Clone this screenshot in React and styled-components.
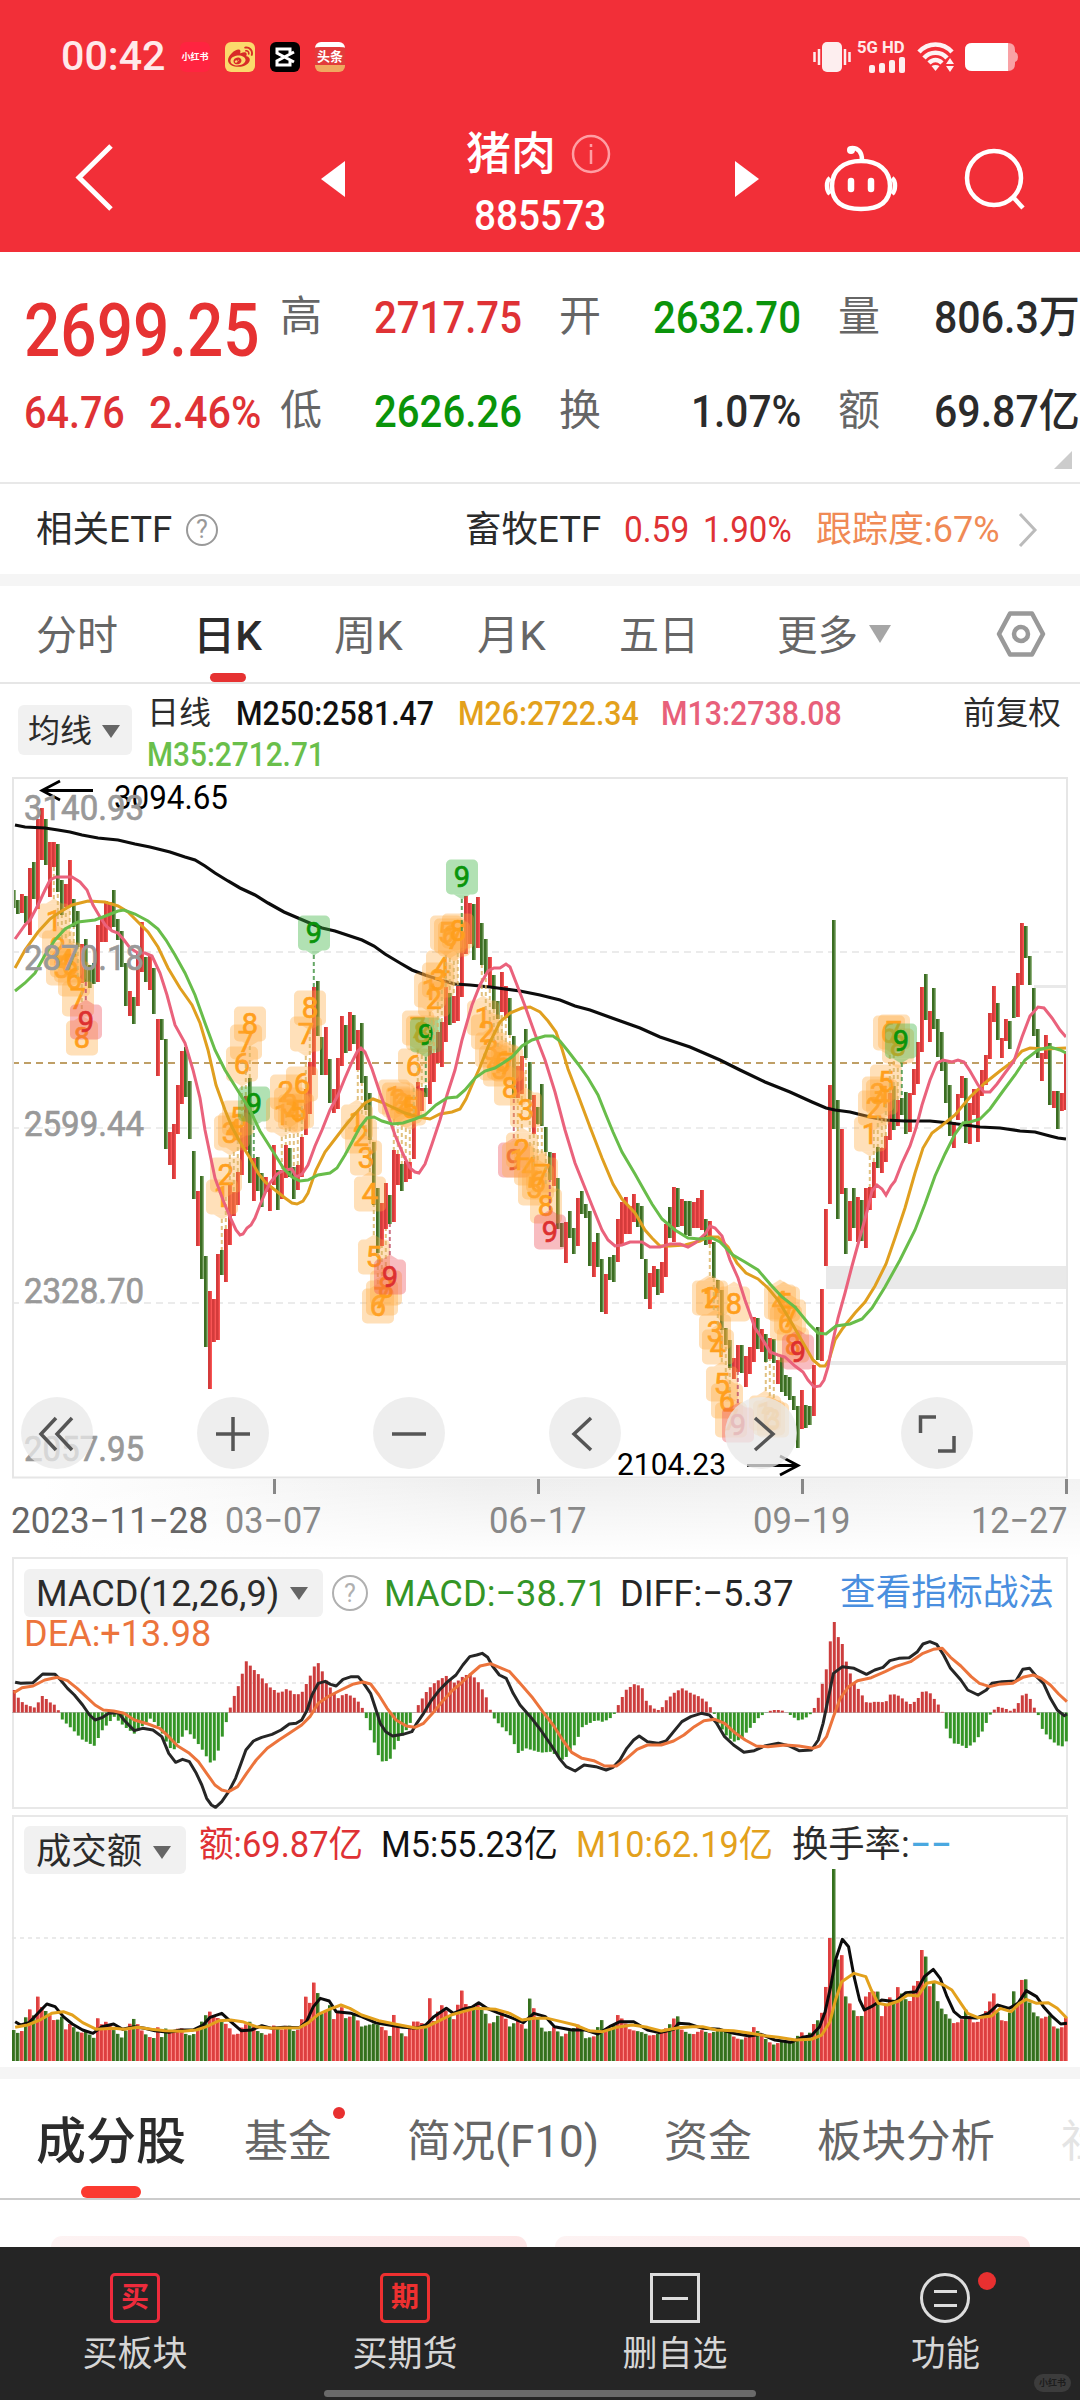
import React, { useLayoutEffect, useRef, useState } from "react";
import styled, { createGlobalStyle } from "styled-components";
import { FaWeibo } from "react-icons/fa";

const GlobalStyle = createGlobalStyle`
    * {
        box-sizing: border-box;
    }
    body {
        margin: 0;
        background: #fff;
        font-family: Roboto, "Noto Sans CJK SC", sans-serif;
    }
`;

/* ---------- data ---------- */

// one candle per trading day: direction, high, low
const CANDLES = `G890-908 G900-914 R894-913 G896-923 R868-935 G862-899 R819-909 R808-860 G819-865 R842-897 R842-867 G844-892
G880-915 R884-907 R860-907 G899-927 G911-947 R944-983 G939-982 G965-988 G963-984 R925-982 R917-942 R901-942
R902-929 G890-927 G919-940 G931-967 G963-1006 R991-1016 G997-1024 R953-1006 R922-972 G957-982 R955-990 G968-1014
R1019-1076 G1019-1040 G1039-1149 R1132-1165 R1124-1179 R1085-1134 R1051-1104 G1047-1097 G1081-1139 G1151-1199 R1191-1246 G1176-1279
G1256-1347 R1291-1389 R1299-1342 R1254-1340 G1250-1275 R1229-1282 R1184-1245 R1192-1216 R1172-1205 R1127-1175 R1096-1150 G1078-1183
R1158-1201 G1157-1191 G1173-1207 R1177-1192 R1187-1211 R1145-1185 G1170-1210 R1170-1199 R1145-1178 G1148-1177 G1167-1199 R1165-1190
R1137-1177 R1089-1135 R1062-1114 R987-1075 G981-1036 G1037-1075 R1027-1075 G1059-1103 R1089-1113 R1058-1109 R1016-1066 G1025-1053
R1012-1051 G1015-1044 R1030-1070 G1023-1083 G1076-1110 G1093-1140 G1142-1205 G1188-1253 R1203-1246 R1183-1229 G1195-1224 R1150-1222
R1154-1185 G1164-1191 R1161-1182 R1162-1179 R1119-1159 R1082-1118 R1088-1111 G1088-1097 R1046-1104 R1053-1082 R1032-1063 R1022-1067
R987-1042 G993-1025 R996-1023 R986-1021 R932-997 R896-954 R903-944 G904-960 R897-948 G923-965 G939-974 R957-988
G975-1009 G1001-1019 R972-1012 R986-1018 G998-1035 G1036-1098 R1066-1098 R1056-1094 G1029-1058 G1062-1100 R1095-1134 G1107-1124
G1084-1126 G1127-1152 G1152-1180 R1153-1186 G1178-1229 G1223-1247 R1222-1263 G1211-1238 G1228-1254 R1198-1246 G1191-1214 G1204-1218
G1211-1266 R1242-1277 G1233-1267 G1259-1312 R1274-1314 G1257-1280 G1255-1282 R1219-1262 R1202-1244 R1197-1234 R1206-1234 R1194-1222
G1203-1227 G1206-1259 G1259-1299 R1273-1309 R1266-1287 G1269-1295 R1262-1293 R1224-1277 G1207-1238 R1187-1242 G1188-1227 R1199-1226
G1201-1235 G1201-1236 R1202-1228 R1198-1228 R1190-1230 G1219-1245 R1221-1244 G1242-1278 G1280-1293 G1290-1330 G1328-1345 G1340-1368
R1358-1379 R1345-1372 G1345-1373 R1356-1387 R1347-1374 R1317-1362 G1318-1349 R1329-1352 G1334-1362 R1338-1359 G1339-1363 R1360-1384
G1357-1392 G1375-1396 G1377-1400 G1396-1410 G1406-1448 R1390-1429 G1405-1428 G1406-1425 R1365-1416 G1327-1360 R1289-1361 R1209-1266
R1085-1204 G920-1129 G1100-1219 R1129-1194 G1188-1254 R1201-1241 G1188-1228 R1197-1242 G1200-1241 R1188-1248 R1187-1210 R1162-1198
G1147-1168 R1148-1173 R1136-1162 R1093-1140 G1086-1130 R1100-1126 G1098-1115 G1092-1134 R1093-1132 R1069-1095 R1042-1084 R987-1052
G974-1020 R1011-1042 G988-1029 G1019-1057 G1032-1071 G1062-1103 G1085-1136 R1122-1148 R1094-1120 R1076-1098 G1078-1143 R1103-1144
R1089-1115 R1090-1142 R1070-1096 R1055-1085 R1013-1059 R986-1022 G1003-1040 R1038-1058 R1019-1041 G1021-1049 G986-1018 R973-1017
R923-985 G926-958 G956-985 G988-1036 G1029-1058 R1053-1081 R1035-1059 G1043-1105 R1091-1108 G1091-1129 R1093-1111 R1051-1110`
    .split(/\s+/)
    .map((d, i) => {
        const [high, low] = d.slice(1).split("-").map(Number);
        return { x: 13.8 + i * 4, up: d[0] === "R", high, low };
    });

const MA250 =
    "15,825 25,827 45,828 58,830 70,832 82,835 98,838 118,840 135,844 150,847 170,852 185,857 195,860 205,866 215,873 228,881 240,888 255,895 268,903 284,912 298,918 312,924 322,928 335,931 350,936 362,940 374,946 385,954 400,963 412,970 425,975 440,980 455,984 470,985 490,987 505,989 520,991 540,995 560,1000 575,1006 590,1010 612,1018 640,1028 660,1037 690,1047 720,1060 740,1070 765,1082 790,1092 812,1102 826,1108 835,1110 850,1112 870,1117 885,1120 905,1121 930,1121 950,1123 980,1127 1000,1128 1020,1131 1035,1132 1050,1136 1058,1138 1066,1139";
const MA13 =
    "15,939 25,925 30,920 38,905 45,890 50,880 56,877 72,877 80,882 87,890 93,905 100,917 106,926 112,931 118,933 124,940 130,948 138,953 145,953 152,956 160,973 167,995 175,1025 185,1043 193,1070 200,1098 205,1130 215,1178 223,1200 230,1217 236,1230 240,1235 243,1234 247,1228 251,1225 255,1218 260,1205 266,1191 270,1183 277,1174 285,1170 292,1169 296,1177 302,1174 308,1165 315,1146 322,1130 330,1110 338,1095 345,1078 352,1062 357,1052 361,1048 365,1052 372,1069 380,1093 388,1115 395,1135 403,1154 410,1168 415,1172 419,1173 425,1164 432,1144 440,1120 447,1095 455,1070 462,1040 472,1005 480,985 488,971 494,968 500,968 506,964 510,967 517,985 525,1006 535,1034 545,1060 555,1092 565,1130 575,1163 585,1188 595,1213 602,1230 608,1240 615,1246 622,1245 630,1242 642,1242 650,1247 660,1247 670,1244 680,1244 688,1247 695,1243 705,1234 710,1226 715,1228 722,1236 730,1260 738,1278 745,1300 755,1328 763,1340 770,1352 778,1355 785,1357 795,1366 803,1372 808,1380 814,1387 820,1386 824,1380 828,1367 832,1345 838,1318 845,1293 852,1266 860,1237 868,1208 872,1191 877,1185 882,1189 886,1195 891,1186 895,1181 902,1163 910,1146 916,1128 922,1105 930,1080 937,1063 943,1060 952,1062 958,1060 964,1062 970,1071 978,1085 984,1092 990,1092 997,1084 1005,1073 1014,1061 1022,1037 1030,1016 1038,1007 1044,1008 1052,1018 1060,1030 1066,1037";
const MA26 =
    "15,968 25,950 38,932 50,919 60,912 72,905 88,901 105,902 118,906 128,912 138,922 148,932 158,947 168,968 180,988 192,1005 200,1023 208,1050 216,1085 225,1110 232,1127 240,1142 250,1158 258,1173 265,1182 275,1190 285,1198 292,1203 297,1204 303,1201 308,1193 316,1170 325,1152 335,1139 345,1126 355,1114 365,1103 373,1099 381,1102 392,1107 405,1113 418,1117 430,1119 440,1114 452,1112 460,1109 466,1099 472,1085 480,1067 490,1042 500,1022 510,1013 522,1008 530,1007 540,1012 548,1021 556,1032 562,1049 568,1069 578,1095 590,1127 602,1158 613,1184 622,1199 635,1213 645,1230 652,1238 660,1246 670,1246 685,1245 700,1241 708,1237 718,1237 728,1247 737,1263 746,1273 758,1279 768,1288 778,1300 790,1320 802,1341 813,1360 820,1366 825,1366 829,1360 835,1340 843,1328 855,1313 865,1302 875,1286 886,1264 895,1238 905,1208 915,1173 923,1148 932,1133 940,1127 955,1115 970,1097 985,1083 1000,1071 1012,1062 1022,1051 1030,1048 1045,1049 1066,1048";
const MA35 =
    "15,991 25,983 35,973 45,955 55,940 65,929 78,922 95,920 108,915 118,911 124,910 135,914 148,921 158,929 166,940 175,955 185,973 195,995 205,1023 215,1050 225,1070 240,1094 250,1110 260,1131 272,1150 284,1169 292,1177 300,1181 308,1180 318,1175 330,1173 337,1168 345,1155 352,1142 360,1127 367,1118 374,1117 382,1121 392,1124 403,1123 415,1119 425,1115 436,1105 447,1098 457,1097 465,1090 475,1078 485,1071 495,1068 503,1063 512,1057 522,1046 532,1040 545,1036 553,1036 560,1041 568,1051 578,1064 588,1078 598,1095 606,1115 613,1132 622,1152 635,1174 644,1190 652,1204 662,1219 675,1230 688,1238 700,1239 712,1238 720,1242 733,1255 745,1262 758,1270 770,1284 782,1297 795,1307 808,1323 818,1333 826,1334 836,1326 850,1324 862,1319 872,1308 885,1287 900,1260 915,1230 925,1204 935,1176 945,1154 955,1134 963,1123 970,1122 980,1119 990,1109 1003,1091 1015,1075 1025,1060 1038,1050 1050,1047 1060,1050 1066,1053";

// nine-turn counters, "x,y" of each badge; low = drawn under the candles
const SEQUENCES = [
    { low: true, at: "54,921 58,948 62,968 66,960 70,965 74,979 78,999 82,1038 86,1022" },
    { low: false, at: "222,1197 226,1175 230,1133 234,1130 238,1118 242,1064 246,1042 250,1024 254,1104" },
    { low: false, at: "282,1115 286,1092 290,1105 294,1112 298,1111 302,1084 306,1034 310,1008 314,933" },
    { low: true, at: "357,1122 361,1136 366,1158 370,1194 374,1257 378,1306 382,1298 386,1288 390,1277" },
    { low: false, at: "394,1097 398,1100 402,1104 406,1106 410,1108 414,1066 418,1028 422,1033 426,1035" },
    { low: false, at: "430,990 434,999 438,980 442,968 446,933 450,936 454,939 458,931 462,877" },
    { low: true, at: "483,1018 487,1032 491,1050 495,1063 499,1069 503,1062 507,1064 510,1088 514,1160" },
    { low: true, at: "518,1160 522,1150 526,1110 530,1168 534,1188 538,1182 542,1175 546,1206 550,1232" },
    { low: true, at: "708,1298 712,1298 715,1332 718,1347 722,1384 727,1401 731,1420 734,1304 738,1425" },
    { low: true, at: "765,1413 769,1418 773,1420 780,1302 784,1304 786,1323 790,1317 793,1345 798,1352" },
    { low: false, at: "870,1134 874,1108 878,1094 882,1097 886,1082 889,1033 894,1032 898,1046 901,1041" },
];

const HIST =
    "22,450 27,480 38,495 50,503 61,467 72,487 79,495 85,514 90,540 103,565 118,598 136,618 148,570 165,530 180,560 195,582 205,560 218,535 230,560 242,610 250,635 258,610 270,570 283,600 295,635 304,668 312,660 318,620 328,545 332,515 336,485 345,440 357,363 366,385 378,410 390,440 405,460 417,445 428,465 437,460 447,420 458,368 463,370 470,410 478,440 490,475 500,460 512,470 522,490 528,515 532,540 540,590 550,655 556,668 567,655 575,610 582,590 593,560 600,520 608,490 620,450 632,425 648,407 660,430 672,408 683,400 695,430 705,470 712,515 718,540 730,565 740,585 752,640 763,625 785,638 800,635 815,660 822,650 835,610 845,560 855,550 865,540 875,546 885,535 892,520 898,490 908,450 922,430 932,445 938,485 948,505 958,512 966,482 980,455 990,445 1003,460 1015,470 1025,485 1035,515 1042,550 1055,590 1067,607 1078,590 1090,560 1102,530 1112,518 1120,510 1133,510 1142,518 1150,530 1160,543 1172,530 1178,518 1185,490 1192,440 1200,380 1205,300 1209,246 1212,246 1216,290 1223,315 1228,365 1237,420 1248,455 1258,490 1270,485 1285,487 1293,460 1305,468 1320,493 1330,482 1340,450 1350,460 1362,495 1368,518 1373,565 1382,610 1392,612 1403,625 1415,605 1427,570 1435,530 1440,515 1447,500 1458,505 1468,514 1475,500 1485,460 1492,462 1500,500 1506,520 1513,570 1525,600 1540,623 1549,600";
const DIFF =
    "22,427 30,430 48,428 62,402 80,403 88,420 98,445 108,465 120,495 130,525 138,540 148,533 158,520 172,518 180,540 195,572 207,565 222,570 235,590 245,640 255,667 265,658 275,665 285,700 293,735 300,775 307,795 313,802 322,785 332,755 342,715 350,670 357,630 368,603 380,592 395,583 408,570 420,552 430,550 438,540 446,510 453,465 462,430 472,424 480,433 488,438 498,418 510,410 520,410 528,430 538,460 546,510 552,550 560,575 570,588 585,583 598,575 605,550 615,520 625,485 638,450 650,425 662,405 672,375 682,350 692,345 700,340 708,352 715,378 725,405 735,415 745,460 755,495 770,530 785,570 800,615 812,655 822,680 835,693 848,675 865,680 880,690 890,682 900,660 910,625 920,600 928,588 940,605 955,610 967,603 978,575 990,545 1003,530 1018,520 1030,525 1040,548 1052,590 1065,615 1080,637 1095,632 1110,618 1130,610 1145,617 1160,632 1178,630 1188,600 1195,550 1203,470 1210,400 1223,380 1240,385 1258,403 1270,390 1282,382 1292,362 1305,355 1320,353 1332,335 1340,312 1350,305 1360,313 1370,345 1380,385 1395,420 1405,450 1420,465 1432,450 1440,430 1455,425 1475,423 1485,388 1495,385 1505,410 1515,430 1525,475 1535,510 1545,527 1549,522";
const DEA =
    "20,458 32,443 48,438 65,420 83,412 98,422 112,445 125,470 138,495 150,510 165,513 180,520 195,540 215,552 232,565 245,590 258,618 275,640 288,665 300,700 312,735 322,750 332,755 345,740 358,700 372,660 388,625 405,600 420,580 438,555 450,530 462,490 478,468 495,450 512,433 527,426 538,432 550,465 562,505 575,540 590,558 602,562 615,550 628,520 642,485 655,455 668,432 682,405 697,378 712,371 725,382 740,395 755,430 772,470 788,515 803,555 817,600 830,637 845,655 862,662 878,678 895,678 910,655 925,628 940,615 960,615 978,603 993,585 1008,560 1022,542 1038,538 1052,550 1068,580 1082,600 1098,618 1115,620 1140,615 1160,618 1180,625 1190,618 1200,590 1210,530 1220,475 1232,440 1245,422 1265,413 1285,395 1300,380 1322,365 1340,340 1355,328 1368,325 1380,352 1395,378 1410,410 1422,430 1437,440 1450,433 1470,430 1485,412 1500,405 1512,415 1525,435 1537,462 1549,485";
const VOLUME =
    "20,690 30,705 42,620 48,660 54,585 60,620 70,640 80,665 90,650 95,690 102,670 115,700 125,695 137,715 142,655 150,680 155,660 165,690 178,715 185,680 195,655 205,690 215,710 225,715 230,675 235,712 242,680 250,700 262,680 272,708 285,700 293,665 303,632 312,650 322,660 332,680 342,712 352,680 363,665 375,695 390,708 398,675 410,690 418,670 430,702 438,660 444,590 449,620 454,548 457,548 461,575 468,650 478,610 485,660 495,615 503,660 513,640 525,680 545,670 558,685 566,708 571,640 577,680 588,715 598,665 610,665 618,680 624,595 630,665 640,612 650,640 660,660 669,572 672,572 676,612 686,625 695,612 705,640 713,680 728,630 740,680 752,660 765,690 769,595 775,625 785,680 795,700 805,680 815,710 830,690 840,672 850,715 862,710 873,657 880,690 890,680 897,645 905,660 915,690 930,695 945,708 958,700 970,680 983,642 990,690 1005,705 1018,690 1030,700 1045,690 1060,700 1068,715 1080,720 1095,680 1105,705 1122,735 1135,725 1150,730 1163,695 1172,715 1182,670 1188,660 1194,635 1199,560 1203,414 1206,414 1208,207 1213,207 1216,480 1222,462 1228,590 1235,615 1242,640 1250,660 1258,580 1265,575 1275,575 1280,650 1290,590 1298,600 1303,560 1312,590 1320,610 1327,555 1334,540 1337,450 1340,450 1344,468 1350,560 1357,540 1362,610 1372,640 1385,670 1395,665 1403,625 1412,668 1422,665 1430,640 1437,605 1443,580 1450,650 1458,670 1465,650 1472,573 1478,610 1483,540 1490,538 1496,620 1503,645 1515,658 1523,640 1530,680 1540,690 1549,645";
const VOL_M5 =
    "22,665 30,675 42,668 55,640 68,612 80,620 92,650 105,672 120,690 135,700 148,680 165,672 178,688 195,680 210,685 225,692 245,697 262,690 280,690 295,675 305,652 322,640 335,665 350,692 365,690 380,677 395,685 412,682 435,683 445,665 455,620 465,595 478,603 488,635 510,640 525,650 545,668 565,675 585,682 605,685 618,675 630,650 648,625 658,640 672,628 685,622 695,608 707,625 725,640 745,655 760,668 775,640 792,650 805,680 830,690 850,690 868,702 885,680 900,665 920,665 940,690 958,698 978,688 985,670 1000,672 1020,685 1045,688 1065,700 1088,708 1105,703 1125,720 1148,727 1165,712 1178,707 1190,680 1198,635 1206,560 1213,480 1223,418 1232,440 1240,530 1248,600 1255,630 1265,620 1280,600 1300,605 1315,578 1330,575 1342,530 1355,508 1365,535 1375,590 1385,635 1395,652 1418,654 1435,640 1448,615 1465,625 1478,610 1490,572 1505,590 1515,620 1528,650 1540,672 1549,670";
const VOL_M10 =
    "22,682 40,675 58,660 75,640 92,635 105,645 120,668 140,688 165,685 180,688 200,682 220,688 240,692 265,694 285,690 300,680 318,662 335,660 352,665 372,680 395,685 435,683 448,668 462,643 478,628 495,615 508,625 525,645 550,662 575,673 605,685 620,680 638,662 655,645 672,635 690,625 720,628 740,640 758,660 775,655 795,655 815,665 835,675 855,692 875,695 895,682 918,675 940,682 960,693 985,683 1005,680 1020,680 1040,690 1065,692 1090,700 1110,707 1130,712 1155,720 1178,718 1193,705 1205,665 1213,600 1222,545 1240,520 1257,530 1265,570 1275,610 1288,615 1305,603 1318,585 1333,588 1345,550 1357,545 1370,555 1382,570 1395,610 1405,640 1420,653 1440,648 1452,625 1468,635 1480,610 1490,598 1505,610 1522,608 1535,625 1549,655";

const parse = (text) => text.split(" ").map((p) => p.split(",").map(Number));

// indicator series are stored on a 1568-wide grid, 3 units per pixel in height
const toPanel = (text, top) => parse(text).map(([x, y]) => [(x * 1080) / 1568, top + y / 3]);

const sample = (points, x) => {
    const next = points.findIndex((p) => p[0] >= x);
    if (next === -1) return points[points.length - 1][1];
    if (next === 0) return points[0][1];
    const [x0, y0] = points[next - 1];
    const [x1, y1] = points[next];
    return y0 + ((y1 - y0) * (x - x0)) / (x1 - x0);
};

/* ---------- shared parts ---------- */

const Box = styled.span`
    display: inline-block;
    flex: none;
    width: ${(props) => props.$w}px;
    margin-left: ${(props) => props.$ml || 0}px;
    line-height: 1;
    font-size: ${(props) => props.$size}px;
    font-weight: ${(props) => props.$weight || 400};
    color: ${(props) => props.$color || "#2b2b2b"};
    white-space: nowrap;
`;

const Inner = styled.span`
    display: inline-block;
    transform-origin: left center;
`;

// condenses its text to the given width, like the narrow numerals of a quote font
function Label({ w, children, ...rest }) {
    const ref = useRef(null);
    const [ratio, setRatio] = useState(1);
    useLayoutEffect(() => {
        setRatio(w / ref.current.offsetWidth);
    }, [w, children]);
    const props = Object.fromEntries(Object.entries(rest).map(([k, v]) => ["$" + k, v]));
    return (
        <Box $w={w} {...props}>
            <Inner ref={ref} style={{ transform: `scaleX(${ratio})` }}>
                {children}
            </Inner>
        </Box>
    );
}

const Page = styled.main`
    position: relative;
    width: 1080px;
    height: 2400px;
    overflow: hidden;
    background: #fff;
    display: flex;
    flex-direction: column;
`;

const Band = styled.div`
    flex: none;
    height: 12px;
    margin-top: ${(props) => props.$mt || 0}px;
    background: #f5f5f5;
`;

const Caret = styled.i`
    flex: none;
    margin-left: ${(props) => props.$ml}px;
    border-left: ${(props) => props.$size}px solid transparent;
    border-right: ${(props) => props.$size}px solid transparent;
    border-top: ${(props) => props.$h}px solid ${(props) => props.$color || "#666"};
`;

const Help = styled.span`
    flex: none;
    display: flex;
    align-items: center;
    justify-content: center;
    width: ${(props) => props.$size}px;
    height: ${(props) => props.$size}px;
    margin-left: ${(props) => props.$ml}px;
    border: 2px solid ${(props) => props.$color};
    border-radius: 50%;
    color: ${(props) => props.$color};
    font-size: 25px;
    line-height: 1;
`;

const Icon = styled.svg`
    flex: none;
    margin-left: ${(props) => props.$ml || 0}px;
`;

/* ---------- header ---------- */

const Header = styled.header`
    flex: none;
    height: 252px;
    background: #f22f38;
    color: #fff;
`;

const StatusBar = styled.div`
    display: flex;
    align-items: center;
    height: 114px;
    padding-left: 61px;
`;

const AppIcon = styled.span`
    flex: none;
    display: flex;
    align-items: center;
    justify-content: center;
    width: 30px;
    height: 30px;
    margin-left: 15px;
    border-radius: 6px;
    background: ${(props) => props.$bg};
    font-size: ${(props) => props.$size || 9}px;
    font-weight: 700;
    line-height: 1;
    white-space: nowrap;
    overflow: hidden;
`;

const Toutiao = styled(AppIcon)`
    border-top: 5px solid #fff;
    border-bottom: 7px solid #f0a860;
`;

const Signal = styled.div`
    width: 49px;
    margin-left: 6px;
`;

const NavBar = styled.div`
    display: flex;
    align-items: center;
    height: 130px;
`;

const Title = styled.div`
    display: flex;
    flex-direction: column;
    width: 389px;
    padding-left: 120px;
    height: 130px;
    padding-top: 15px;
`;

const TitleRow = styled.div`
    display: flex;
    align-items: center;
    height: 50px;
    margin-bottom: 16px;
`;

function StatusIcons() {
    return (
        <>
            <Icon $ml={468} width="38" height="32" viewBox="0 0 38 32" fill="#fff" opacity=".92">
                <rect x="9" y="1" width="20" height="30" rx="5" />
                <path d="M6 8v16M1.500 11v10M32 8v16M36.500 11v10" stroke="#fff" strokeWidth="2.500" />
            </Icon>
            <Signal>
                <Label w={48} size={17} weight={700} color="#ffe9ea">
                    5G HD
                </Label>
                <svg width="49" height="16" viewBox="0 0 49 16" fill="#fff" opacity=".92">
                    <rect x="12" y="8" width="6" height="8" rx="2" />
                    <rect x="22" y="6" width="6" height="10" rx="2" />
                    <rect x="32" y="3" width="6" height="13" rx="2" />
                    <rect x="42" y="0" width="6" height="16" rx="2" />
                </svg>
            </Signal>
            <Icon $ml={11} width="38" height="32" viewBox="0 0 38 32" fill="none" stroke="#fff" strokeWidth="4.500" opacity=".94">
                <path d="M2 11C11 1 26 1 35 11M7 17c6-7 17-7 23 0M12 22c4-4 9-4 13 0" />
                <path d="M18.500 30l-4-5q4-2 8 0z" fill="#fff" stroke="none" />
                <path d="M33 17l4 6h-8zM33 31l4-6h-8z" fill="#fff" stroke="none" />
            </Icon>
            <Icon $ml={9} width="56" height="28" viewBox="0 0 56 28" fill="#fff">
                <path d="M8 0h36q7 0 7 7v2q3 1 3 5t-3 5v2q0 7-7 7H8q-7 0-7-7V7q0-7 7-7z" opacity=".55" />
                <path d="M8 0h36v28H8q-7 0-7-7V7q0-7 7-7z" />
            </Icon>
        </>
    );
}

function TopHeader() {
    return (
        <Header>
            <StatusBar>
                <Label w={104} size={40} weight={500} color="#ffe9ea">
                    00:42
                </Label>
                <AppIcon $bg="#ff2440">小红书</AppIcon>
                <AppIcon $bg="#fbd96c">
                    <FaWeibo size={25} color="#d82b28" />
                </AppIcon>
                <AppIcon $bg="#000">
                    <svg width="22" height="20" viewBox="0 0 22 20" fill="none" stroke="#fff" strokeWidth="3">
                        <path d="M20 5L3 14v4h13v-4M20 15L3 6V2h13v4" />
                    </svg>
                </AppIcon>
                <Toutiao $bg="#e23b3b" $size={13}>
                    头条
                </Toutiao>
                <StatusIcons />
            </StatusBar>
            <NavBar>
                <Icon width="120" height="80" viewBox="0 0 120 80" fill="none" stroke="#fff" strokeWidth="5">
                    <path d="M111 7L79 38.500L111 70" />
                </Icon>
                <Icon $ml={201} width="25" height="38" viewBox="0 0 25 38" fill="#fff">
                    <path d="M24 1v36L0 19z" />
                </Icon>
                <Title>
                    <TitleRow>
                        <Label w={90} size={45} weight={500} color="#fff">
                            猪肉
                        </Label>
                        <Icon $ml={15} width="40" height="42" viewBox="0 0 40 42" fill="none" stroke="#ff9ea3" strokeWidth="2.500">
                            <circle cx="20" cy="21" r="18" />
                            <path d="M20 17v14M20 11v3" />
                        </Icon>
                    </TitleRow>
                    <Label w={132} ml={8} size={42} weight={500} color="#fff">
                        885573
                    </Label>
                </Title>
                <Icon width="25" height="38" viewBox="0 0 25 38" fill="#fff">
                    <path d="M0 1v36L24 19z" />
                </Icon>
                <Icon $ml={63} width="76" height="70" viewBox="0 0 76 70" fill="none" stroke="#fff" strokeWidth="4.500">
                    <path d="M38 17c17 0 29 9 29 25S56 65 38 65S9 58 9 42s12-25 29-25z" />
                    <path d="M39 16c0-7-3-12-10-12" strokeLinecap="round" />
                    <circle cx="28" cy="6" r="4" fill="#fff" stroke="none" />
                    <path d="M7 34c-4 3-4 12 0 16M69 34c4 3 4 12 0 16" />
                    <path d="M28 37v8M48 37v8" strokeWidth="6.500" strokeLinecap="round" />
                </Icon>
                <Icon $ml={64} width="64" height="64" viewBox="0 0 64 64" fill="none" stroke="#fff" strokeWidth="4.500">
                    <circle cx="31" cy="31" r="27" />
                    <path d="M50 50l10 11" />
                </Icon>
            </NavBar>
        </Header>
    );
}

/* ---------- quote ---------- */

const QuoteSection = styled.section`
    position: relative;
    flex: none;
    display: flex;
    height: 232px;
    border-bottom: 2px solid #e8e8e8;
`;

const PriceBlock = styled.div`
    width: 280px;
    padding: 41px 0 0 24px;
    display: flex;
    flex-direction: column;
`;

const ChangeRow = styled.div`
    display: flex;
    margin-top: 22px;
`;

const Stats = styled.div`
    display: grid;
    grid-template-columns: repeat(3, 242px);
    grid-auto-rows: 94px;
    column-gap: 37px;
    padding-top: 18px;
`;

const Stat = styled.div`
    display: flex;
    align-items: center;
    justify-content: space-between;
`;

const Corner = styled.i`
    position: absolute;
    right: 8px;
    bottom: 13px;
    border-left: 18px solid transparent;
    border-bottom: 18px solid #ccc;
`;

const RED = "#df3235";
const GREEN = "#0a940a";

const STATS = [
    ["高", "2717.75", RED, 148],
    ["开", "2632.70", GREEN, 148],
    ["量", "806.3万", "#2b2b2b", 146],
    ["低", "2626.26", GREEN, 148],
    ["换", "1.07%", "#2b2b2b", 110],
    ["额", "69.87亿", "#2b2b2b", 146],
];

function Quote() {
    return (
        <QuoteSection>
            <PriceBlock>
                <Label w={236} size={75} weight={500} color="#e63232">
                    2699.25
                </Label>
                <ChangeRow>
                    <Label w={101} size={45} weight={500} color={RED}>
                        64.76
                    </Label>
                    <Label w={112} ml={24} size={45} weight={500} color={RED}>
                        2.46%
                    </Label>
                </ChangeRow>
            </PriceBlock>
            <Stats>
                {STATS.map(([name, value, color, w]) => (
                    <Stat key={name}>
                        <Label w={42} size={42} color="#666">
                            {name}
                        </Label>
                        <Label w={w} size={45} weight={500} color={color}>
                            {value}
                        </Label>
                    </Stat>
                ))}
            </Stats>
            <Corner />
        </QuoteSection>
    );
}

const EtfRow = styled.div`
    flex: none;
    display: flex;
    align-items: center;
    height: 90px;
    padding: 1px 0 0 36px;
`;

function Etf() {
    return (
        <EtfRow>
            <Label w={136} size={36}>相关ETF</Label>
            <Help $size={32} $ml={14} $color="#999">?</Help>
            <Label w={136} ml={247} size={36}>畜牧ETF</Label>
            <Label w={65} ml={23} size={36} color={RED}>0.59</Label>
            <Label w={89} ml={14} size={36} color={RED}>1.90%</Label>
            <Label w={184} ml={24} size={36} color="#f08a55">跟踪度:67%</Label>
            <Icon $ml={17} width="22" height="36" viewBox="0 0 22 36" fill="none" stroke="#bbb" strokeWidth="3">
                <path d="M3 2l15 16L3 34" />
            </Icon>
        </EtfRow>
    );
}

/* ---------- period tabs ---------- */

const PeriodTabs = styled.nav`
    flex: none;
    display: flex;
    align-items: center;
    height: 98px;
    padding-left: 36px;
    border-bottom: 2px solid #e6e6e6;
`;

const PeriodTab = styled.div`
    display: flex;
    align-items: center;
    height: 96px;
    padding-top: 4px;
    position: relative;
    margin-left: ${(props) => props.$ml || 0}px;
`;

const Underline = styled.i`
    position: absolute;
    bottom: 0;
    left: 50%;
    margin-left: -${(props) => props.$w / 2}px;
    width: ${(props) => props.$w}px;
    height: ${(props) => props.$h}px;
    border-radius: ${(props) => props.$h / 2}px;
    background: ${(props) => props.$color};
`;

const PERIODS = [
    ["分时", 82, 0],
    ["日K", 69, 75],
    ["周K", 69, 72],
    ["月K", 69, 74],
    ["五日", 80, 73],
    ["更多", 81, 78],
];

function Periods() {
    return (
        <PeriodTabs>
            {PERIODS.map(([name, w, ml]) => (
                <PeriodTab key={name} $ml={ml}>
                    <Label w={w} size={41} weight={name === "日K" ? 500 : 400} color={name === "日K" ? "#2b2b2b" : "#666"}>
                        {name}
                    </Label>
                    {name === "日K" && <Underline $w={36} $h={9} $color="#e63232" />}
                </PeriodTab>
            ))}
            <Caret $ml={11} $size={11} $h={18} $color="#a6a6a6" />
            <Icon $ml={105} width="50" height="46" viewBox="0 0 50 46" fill="none" stroke="#999" strokeWidth="4.500">
                <path d="M14 2.500h22L47 23L36 43.500H14L3 23z" strokeLinejoin="round" />
                <circle cx="25" cy="23" r="7" />
            </Icon>
        </PeriodTabs>
    );
}

/* ---------- moving average legend ---------- */

const MaBar = styled.div`
    flex: none;
    display: flex;
    height: 93px;
    padding-left: 18px;
`;

const Select = styled.button`
    flex: none;
    display: flex;
    align-items: center;
    width: ${(props) => props.$w}px;
    height: ${(props) => props.$h || 48}px;
    margin: ${(props) => props.$mt || 0}px 0 0 0;
    padding: ${(props) => props.$pt || 0}px 0 0 ${(props) => props.$pl || 12}px;
    border: 0;
    border-radius: 6px;
    background: #f1f1f1;
    font-family: inherit;
`;

const Legend = styled.div`
    padding: 8px 0 0 15px;
`;

const LegendRow = styled.div`
    display: flex;
    align-items: center;
    height: 41px;
`;

function MaLegend() {
    return (
        <MaBar>
            <Select $w={114} $h={50} $mt={21} $pl={10} $pt={2}>
                <Label w={64} size={32}>均线</Label>
                <Caret $ml={10} $size={9} $h={13} />
            </Select>
            <Legend>
                <LegendRow>
                    <Label w={64} size={32}>日线</Label>
                    <Label w={198} ml={25} size={34} weight={500} color="#111">M250:2581.47</Label>
                    <Label w={181} ml={24} size={34} weight={500} color="#e3a11c">M26:2722.34</Label>
                    <Label w={181} ml={22} size={34} weight={500} color="#e8607a">M13:2738.08</Label>
                    <Label w={98} ml={121} size={32}>前复权</Label>
                </LegendRow>
                <LegendRow>
                    <Label w={178} size={34} weight={500} color="#6abf4b">M35:2712.71</Label>
                </LegendRow>
            </Legend>
        </MaBar>
    );
}

/* ---------- candle chart ---------- */

const ChartPanel = styled.section`
    position: relative;
    flex: none;
    width: 1056px;
    height: ${(props) => props.$h}px;
    margin: ${(props) => props.$mt || 0}px 0 0 12px;
`;

const ChartSvg = styled.svg`
    position: absolute;
    left: 0;
    top: 0;
    display: block;
    font-family: Roboto, sans-serif;
`;

const Controls = styled.div`
    position: absolute;
    left: 9px;
    top: 620px;
    display: flex;
    gap: 104px;
`;

const RoundButton = styled.button`
    width: 72px;
    height: 72px;
    padding: 0;
    border: 0;
    border-radius: 50%;
    background: rgba(232, 232, 232, 0.76);
`;

const BADGE = {
    plain: ["rgba(255,170,60,.36)", "#ff9f1c", "#d9b260"],
    sell: ["rgba(60,180,65,.4)", "#0a940a", "#3f9140"],
    buy: ["rgba(235,70,80,.36)", "#dd3030", "#c05068"],
};

function Badge({ x, y, n, low }) {
    const [fill, ink, dash] = BADGE[n < 9 ? "plain" : low ? "buy" : "sell"];
    const candle = CANDLES[Math.round((x - 13.8) / 4)];
    const dir = low ? -1 : 1;
    const tip = y + dir * 22;
    const end = low ? candle.low : candle.high;
    const visible = low ? end < tip : end > tip;
    return (
        <g>
            {visible && <path d={`M${candle.x} ${tip}V${end}`} stroke={dash} strokeWidth="2" strokeDasharray="4 3" opacity=".8" />}
            <rect x={x - 16} y={y - 17.5} width="32" height="35" rx="5" fill={fill} />
            <path d={`M${x - 8} ${y + dir * 17.5}h16l-8 ${dir * 5}z`} fill={fill} />
            <text x={x} y={y + 10} fontSize="29" textAnchor="middle" fill={ink} stroke={ink} strokeWidth=".7">
                {n}
            </text>
        </g>
    );
}

const AXIS_LABELS = [
    ["3140.93", 820],
    ["2870.18", 970],
    ["2599.44", 1136],
    ["2328.70", 1303],
    ["2057.95", 1461],
];

const ICONS = [
    "M35 21L20 37L35 53M51 21L36 37L51 53",
    "M19 37H53M36 20V54",
    "M19 37H53",
    "M42 21L25 37L42 53",
    "M30 21L48 37L30 53",
    "M19.500 36V20H35M37 54H53V39",
];

function CandleChart() {
    return (
        <ChartPanel $h={702}>
            <ChartSvg width="1056" height="702" viewBox="12 777 1056 702" fill="none">
                <path d="M12 952H1067M12 1303H1067" stroke="#d8d8d8" strokeWidth="1.200" strokeDasharray="7 5" />
                <path d="M12 1128H1067" stroke="#e8e8e8" strokeWidth="1.500" strokeDasharray="7 5" />
                <path d="M826 1266h242v23H826zM829 1361h239v4H829zM1034 985h34v3h-34z" fill="#e9e9e9" />
                <path d="M12 1063H1067" stroke="#bf9f66" strokeWidth="1.800" strokeDasharray="7 5" />
                {CANDLES.map(({ x, up, high, low }) => (
                    <g key={x}>
                        <rect x={x - 1.8} y={high} width="4" height={low - high} fill={up ? "#f95555" : "#8fb27c"} />
                        <rect x={x - 1.8} y={high} width="2.600" height={low - high} fill={up ? "#d43b3b" : "#3b6d22"} />
                    </g>
                ))}
                <path d="M42 790.500H93M60 781L42 790.500L60 800" stroke="#000" strokeWidth="2.800" />
                <text x="114" y="809" fontSize="33" fill="#000" textLength="114" lengthAdjust="spacingAndGlyphs">
                    3094.65
                </text>
                <polyline points={MA250} stroke="#0c0c0c" strokeWidth="3.200" />
                {SEQUENCES.map(({ low, at }) =>
                    parse(at).map(([x, y], i) => <Badge key={x} x={x} y={y} n={i + 1} low={low} />)
                )}
                <polyline points={MA26} stroke="#e09f1f" strokeWidth="3" />
                <polyline points={MA13} stroke="#ea627c" strokeWidth="3" />
                <polyline points={MA35} stroke="#68bd4a" strokeWidth="3" />
                {AXIS_LABELS.map(([value, y]) => (
                    <text key={value} x="24" y={y} fontSize="35" fill="#999" stroke="#999" strokeWidth=".7" textLength="120" lengthAdjust="spacingAndGlyphs">
                        {value}
                    </text>
                ))}
                <path d="M13 1478V778H1067V1478M12 1477.500H1068" stroke="#e6e6e6" strokeWidth="2" />
                <text x="617" y="1475" fontSize="32" fill="#000" textLength="109" lengthAdjust="spacingAndGlyphs">
                    2104.23
                </text>
                <path d="M747 1465.500H798M780 1456L798 1465.500L780 1475" stroke="#000" strokeWidth="2.800" />
            </ChartSvg>
            <Controls>
                {ICONS.map((d) => (
                    <RoundButton key={d}>
                        <svg width="72" height="72" viewBox="0 0 72 72" fill="none" stroke="#555" strokeWidth="3.500">
                            <path d={d} />
                        </svg>
                    </RoundButton>
                ))}
            </Controls>
        </ChartPanel>
    );
}

const Axis = styled.div`
    flex: none;
    height: 78px;
    background: linear-gradient(to bottom, transparent, #fff), linear-gradient(to right, #fff 4%, #f8f8f8 22%, #eeeeee 45%, #f3f3f3 100%);
`;

const Ticks = styled.div`
    display: flex;
    gap: 261px;
    padding-left: 273px;
    height: 24px;
`;

const Tick = styled.i`
    flex: none;
    width: 3px;
    height: 15px;
    background: #888;
`;

const Dates = styled.div`
    display: flex;
    padding-left: 11px;
`;

function DateAxis() {
    return (
        <Axis>
            <Ticks>
                <Tick />
                <Tick />
                <Tick />
                <Tick />
            </Ticks>
            <Dates>
                <Label w={197} size={36} color="#666">2023−11−28</Label>
                <Label w={97} ml={17} size={36} color="#8a8a8a">03−07</Label>
                <Label w={98} ml={167} size={36} color="#888">06−17</Label>
                <Label w={98} ml={166} size={36} color="#888">09−19</Label>
                <Label w={97} ml={120} size={36} color="#888">12−27</Label>
            </Dates>
        </Axis>
    );
}

/* ---------- MACD and turnover ---------- */

const PanelHead = styled.div`
    position: relative;
    display: flex;
    align-items: center;
    padding: 12px 0 0 12px;
`;

const DeaRow = styled.div`
    position: relative;
    margin-top: -2px;
    padding-left: 12px;
`;

const VolumeLegend = styled.div`
    display: flex;
    margin: -10px 0 0 13px;
`;

function Macd() {
    const hist = toPanel(HIST, 1540);
    return (
        <ChartPanel $h={252}>
            <ChartSvg width="1056" height="252" viewBox="12 1557 1056 252" fill="none">
                <rect x="13" y="1558" width="1054" height="250" stroke="#e8e8e8" strokeWidth="2" />
                <path d="M12 1683H1067" stroke="#e4e4e4" strokeWidth="1.500" strokeDasharray="4 4" />
                <path d="M12 1712.500H1067" stroke="#bbb" strokeWidth="1" />
                {CANDLES.map(({ x }) => {
                    const y = sample(hist, x);
                    return y < 1712.5 ? (
                        <rect key={x} x={x - 1} y={y} width="3" height={1712.5 - y} fill="#cc3d3d" />
                    ) : (
                        <rect key={x} x={x - 1} y="1712.500" width="3" height={y - 1712.5} fill="#349526" />
                    );
                })}
                <polyline points={toPanel(DIFF, 1540).join(" ")} stroke="#262626" strokeWidth="3" strokeLinejoin="round" />
                <polyline points={toPanel(DEA, 1540).join(" ")} stroke="#ec743c" strokeWidth="3" strokeLinejoin="round" />
            </ChartSvg>
            <PanelHead>
                <Select $w={299} $pt={1}>
                    <Label w={243} size={36}>MACD(12,26,9)</Label>
                    <Caret $ml={11} $size={9} $h={13} />
                </Select>
                <Help $size={36} $ml={9} $color="#b0b0b0">?</Help>
                <Label w={223} ml={16} size={37} color="#349526">MACD:−38.71</Label>
                <Label w={174} ml={13} size={37} color="#262626">DIFF:−5.37</Label>
                <Label w={214} ml={46} size={36} color="#4a8fdf">查看指标战法</Label>
            </PanelHead>
            <DeaRow>
                <Label w={187} size={37} color="#ec743c">DEA:+13.98</Label>
            </DeaRow>
        </ChartPanel>
    );
}

function Turnover() {
    const volume = toPanel(VOLUME, 1800);
    return (
        <ChartPanel $h={247} $mt={5}>
            <ChartSvg width="1056" height="247" viewBox="12 1814 1056 247" fill="none">
                <path d="M13 2061V1816H1067V2061" stroke="#e8e8e8" strokeWidth="2" />
                <path d="M12 1938H1067" stroke="#e4e4e4" strokeWidth="1.500" strokeDasharray="4 4" />
                {CANDLES.map(({ x, up }) => {
                    const y = sample(volume, x);
                    return (
                        <g key={x}>
                            <rect x={x - 1.8} y={y} width="4" height={2061 - y} fill={up ? "#fb8a86" : "#a5c096"} />
                            <rect x={x - 1.8} y={y} width="2.800" height={2061 - y} fill={up ? "#dd3f3f" : "#34701d"} />
                        </g>
                    );
                })}
                <polyline points={toPanel(VOL_M5, 1800).join(" ")} stroke="#0c0c0c" strokeWidth="3" strokeLinejoin="round" />
                <polyline points={toPanel(VOL_M10, 1800).join(" ")} stroke="#e3a11c" strokeWidth="3" strokeLinejoin="round" />
            </ChartSvg>
            <PanelHead>
                <Select $w={162} $pt={4}>
                    <Label w={106} size={36}>成交额</Label>
                    <Caret $ml={11} $size={9} $h={13} />
                </Select>
                <VolumeLegend>
                    <Label w={164} size={36} color={RED}>额:69.87亿</Label>
                    <Label w={177} ml={18} size={36} color="#111">M5:55.23亿</Label>
                    <Label w={197} ml={18} size={36} color="#e3a11c">M10:62.19亿</Label>
                    <Label w={118} ml={19} size={36}>换手率:</Label>
                    <Label w={42} size={36} weight={500} color="#4aa8e0">−−</Label>
                </VolumeLegend>
            </PanelHead>
        </ChartPanel>
    );
}

/* ---------- section tabs and footer ---------- */

const SectionTabs = styled.nav`
    flex: none;
    display: flex;
    align-items: center;
    height: 121px;
    padding-left: 36px;
    border-bottom: 2px solid #ccc;
    overflow: hidden;
`;

const SectionTab = styled.div`
    position: relative;
    display: flex;
    align-items: center;
    height: 119px;
    padding-top: 7px;
    margin-left: ${(props) => props.$ml || 0}px;
`;

const Dot = styled.i`
    position: absolute;
    top: ${(props) => props.$top}px;
    right: ${(props) => props.$right}px;
    width: ${(props) => props.$size}px;
    height: ${(props) => props.$size}px;
    border-radius: 50%;
    background: #e83030;
`;

const Cards = styled.div`
    flex: none;
    display: flex;
    gap: 28px;
    height: 47px;
    padding: 36px 50px 0 51px;
`;

const Card = styled.div`
    flex: 1;
    border-radius: 12px 12px 0 0;
    background: linear-gradient(to right, #fdf3f3, #fde6e6);
`;

const Footer = styled.footer`
    position: relative;
    flex: none;
    display: grid;
    grid-template-columns: repeat(4, 270px);
    height: 153px;
    background: #252525;
`;

const FooterItem = styled.div`
    display: flex;
    flex-direction: column;
    align-items: center;
    padding-top: 26px;
`;

const FooterIcon = styled.div`
    position: relative;
    display: flex;
    align-items: center;
    justify-content: center;
    width: 50px;
    height: 50px;
    margin-bottom: 14px;
    border: 3px solid ${(props) => props.$color};
    border-radius: ${(props) => props.$r}px;
    color: ${(props) => props.$color};
    font-size: 28px;
    font-weight: 700;
    line-height: 1;
`;

const Dash = styled.i`
    width: ${(props) => props.$w}px;
    height: 3px;
    background: #ddd;
`;

const Bars = styled.div`
    display: flex;
    flex-direction: column;
    gap: 11px;
`;

const HomeBar = styled.i`
    position: absolute;
    left: 324px;
    bottom: 3px;
    width: 432px;
    height: 7px;
    border-radius: 4px;
    background: #6a6a6a;
`;

const Watermark = styled.span`
    position: absolute;
    right: 9px;
    bottom: 8px;
    width: 37px;
    height: 18px;
    border-radius: 9px;
    background: #3c3c3c;
    color: #1d1d1d;
    font-size: 9px;
    font-weight: 700;
    line-height: 18px;
    text-align: center;
`;

function Sections() {
    return (
        <SectionTabs>
            <SectionTab>
                <Label w={150} size={50} weight={500}>成分股</Label>
                <Underline $w={60} $h={12} $color="#fb3a30" />
            </SectionTab>
            <SectionTab $ml={58}>
                <Label w={88} size={44} color="#666">基金</Label>
                <Dot $top={28} $right={-13} $size={12} />
            </SectionTab>
            <SectionTab $ml={75}>
                <Label w={192} size={44} color="#666">简况(F10)</Label>
            </SectionTab>
            <SectionTab $ml={65}>
                <Label w={88} size={44} color="#666">资金</Label>
            </SectionTab>
            <SectionTab $ml={65}>
                <Label w={178} size={44} color="#666">板块分析</Label>
            </SectionTab>
            <SectionTab $ml={66}>
                <Label w={44} size={44} color="#e4e4e4">社</Label>
            </SectionTab>
        </SectionTabs>
    );
}

export default function App() {
    return (
        <Page>
            <GlobalStyle />
            <TopHeader />
            <Quote />
            <Etf />
            <Band />
            <Periods />
            <MaLegend />
            <CandleChart />
            <DateAxis />
            <Macd />
            <Turnover />
            <Band $mt={6} />
            <Sections />
            <Cards>
                <Card />
                <Card />
            </Cards>
            <Footer>
                <FooterItem>
                    <FooterIcon $color="#ee2b3c" $r={5}>买</FooterIcon>
                    <Label w={105} size={35} color="#d6d6d6">买板块</Label>
                </FooterItem>
                <FooterItem>
                    <FooterIcon $color="#ee3030" $r={5}>期</FooterIcon>
                    <Label w={105} size={35} color="#d6d6d6">买期货</Label>
                </FooterItem>
                <FooterItem>
                    <FooterIcon $color="#ddd" $r={0}>
                        <Dash $w={26} />
                    </FooterIcon>
                    <Label w={105} size={35} color="#d6d6d6">删自选</Label>
                </FooterItem>
                <FooterItem>
                    <FooterIcon $color="#ddd" $r={25}>
                        <Bars>
                            <Dash $w={23} />
                            <Dash $w={23} />
                        </Bars>
                        <Dot $top={-4} $right={-29} $size={18} />
                    </FooterIcon>
                    <Label w={69} size={35} color="#d6d6d6">功能</Label>
                </FooterItem>
                <HomeBar />
                <Watermark>小红书</Watermark>
            </Footer>
        </Page>
    );
}
